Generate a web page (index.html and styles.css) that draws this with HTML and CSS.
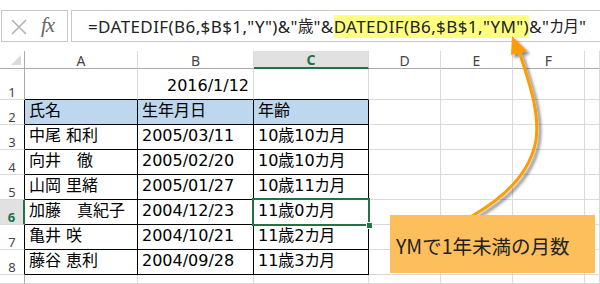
FILE: index.html
```html
<!DOCTYPE html>
<html lang="ja">
<head>
<meta charset="utf-8">
<link rel="stylesheet" href="styles.css">
</head>
<body>
<div class="fbar">
  <div class="fxbox">
    <svg class="xicon" width="18" height="18" viewBox="0 0 18 18"><path d="M2 2 L16 16 M16 2 L2 16" stroke="#b4b4b4" stroke-width="1.6" fill="none"/></svg>
    <span class="fx">fx</span>
  </div>
  <div class="formula">=DATEDIF(B6,$B$1,"Y")&amp;"<span class="jp">歳</span>"&amp;<span class="hl">DATEDIF(B6,$B$1,"YM")</span>&amp;"<span class="jp">カ月</span>"</div>
</div>
<div class="sheet">
  <div class="c h corner"><span class="tri"></span></div>
  <div class="c h">A</div>
  <div class="c h">B</div>
  <div class="c h selcol">C</div>
  <div class="c h">D</div>
  <div class="c h">E</div>
  <div class="c h">F</div>
  <div class="c h"></div>

  <div class="c rh">1</div>
  <div class="c top"></div>
  <div class="c top r">2016/1/12</div>
  <div class="c top"></div>
  <div class="c"></div><div class="c"></div><div class="c"></div><div class="c"></div>

  <div class="c rh tb">2</div>
  <div class="c t hd">氏名</div>
  <div class="c t hd">生年月日</div>
  <div class="c t hd">年齢</div>
  <div class="c"></div><div class="c"></div><div class="c"></div><div class="c"></div>

  <div class="c rh tb">3</div>
  <div class="c t">中尾 和利</div>
  <div class="c t">2005/03/11</div>
  <div class="c t age">10歳10カ月</div>
  <div class="c"></div><div class="c"></div><div class="c"></div><div class="c"></div>

  <div class="c rh tb">4</div>
  <div class="c t">向井　徹</div>
  <div class="c t">2005/02/20</div>
  <div class="c t age">10歳10カ月</div>
  <div class="c"></div><div class="c"></div><div class="c"></div><div class="c"></div>

  <div class="c rh tb">5</div>
  <div class="c t">山岡 里緒</div>
  <div class="c t">2005/01/27</div>
  <div class="c t age">10歳11カ月</div>
  <div class="c"></div><div class="c"></div><div class="c"></div><div class="c"></div>

  <div class="c rh tb selrow">6</div>
  <div class="c t">加藤　真紀子</div>
  <div class="c t">2004/12/23</div>
  <div class="c t age sel">11歳0カ月</div>
  <div class="c"></div><div class="c"></div><div class="c"></div><div class="c"></div>

  <div class="c rh tb">7</div>
  <div class="c t">亀井 咲</div>
  <div class="c t">2004/10/21</div>
  <div class="c t age">11歳2カ月</div>
  <div class="c"></div><div class="c"></div><div class="c"></div><div class="c"></div>

  <div class="c rh tb">8</div>
  <div class="c t">藤谷 恵利</div>
  <div class="c t">2004/09/28</div>
  <div class="c t age">11歳3カ月</div>
  <div class="c"></div><div class="c"></div><div class="c"></div><div class="c"></div>

  <div class="c rh"></div>
  <div class="c"></div><div class="c"></div><div class="c"></div>
  <div class="c"></div><div class="c"></div><div class="c"></div><div class="c"></div>
</div>

<svg class="arrow" width="600" height="284" viewBox="0 0 600 284">
  <defs>
    <filter id="sh" x="-20%" y="-20%" width="140%" height="140%">
      <feDropShadow dx="3" dy="3" stdDeviation="1.6" flood-color="#000" flood-opacity="0.45"/>
    </filter>
  </defs>
  <g filter="url(#sh)">
    <path d="M472 216 C500 200 530 175 536 140 C540 110 528 80 520 54" stroke="#ff9c00" stroke-width="3" fill="none" stroke-linecap="round"/>
    <path d="M512 36 L527 51 L511 55 Z" fill="#ff9c00"/>
  </g>
</svg>
<div class="callout">YMで1年未満の月数</div>
</body>
</html>
```

FILE: styles.css
```css
html, body {
  margin: 0;
  padding: 0;
  background: #fff;
}
body {
  width: 600px;
  height: 284px;
  overflow: hidden;
  position: relative;
  font-family: "DejaVu Sans", "Noto Sans CJK JP", sans-serif;
}
.fbar {
  display: flex;
  margin-top: 10px;
  height: 32px;
  margin-left: 1px;
}
.fxbox {
  width: 67px;
  box-sizing: border-box;
  border: 1px solid #c8c8c8;
  display: flex;
  align-items: center;
  padding-left: 8px;
  gap: 13px;
}
.xicon { display: block; margin-top: 1px; }
.fx {
  font-family: "Liberation Serif", serif;
  font-style: italic;
  font-size: 21px;
  color: #666;
  letter-spacing: -1px;
  line-height: 1;
  margin-top: -2px;
}
.formula {
  flex: 1;
  margin-left: 3px;
  box-sizing: border-box;
  border: 1px solid #c8c8c8;
  border-right: none;
  display: flex;
  align-items: center;
  padding-left: 16px;
  font-family: "Noto Sans", "Noto Sans CJK JP", sans-serif;
  font-size: 17px;
  letter-spacing: 0.4px;
  color: #222;
  white-space: nowrap;
  line-height: 23px;
}
.formula .jp {
  font-size: 15.5px;
  letter-spacing: 0;
  font-feature-settings: "palt";
}
.hl { background: #ffff80; }

.sheet {
  margin-top: 9px;
  display: grid;
  grid-template-columns: 25px 113px 116px 115px 72px 72px 72px 15px;
  grid-template-rows: 18px 31px repeat(7, 25px) 9px;
}
.c {
  box-sizing: border-box;
  border-right: 1px solid #d9d9d9;
  border-bottom: 1px solid #d9d9d9;
  display: flex;
  align-items: flex-end;
  padding: 0 4px 5px 4px;
  font-size: 16px;
  line-height: 16px;
  color: #000;
  white-space: nowrap;
  overflow: visible;
}
.h {
  justify-content: center;
  padding: 0;
  font-family: "Noto Sans", sans-serif;
  font-size: 14px;
  line-height: 14px;
  color: #444;
  border-bottom-color: #ababab;
  border-right-color: #dcdcdc;
}
.corner { position: relative; border-right-color: #ababab; }
.tri {
  position: absolute;
  right: 3px;
  bottom: 3px;
  width: 0;
  height: 0;
  border-left: 10px solid transparent;
  border-bottom: 10px solid #dadada;
}
.rh {
  justify-content: center;
  padding: 0;
  font-family: "Noto Sans", sans-serif;
  font-size: 13px;
  line-height: 13px;
  color: #444;
  border-right-color: #ababab;
}
.rh.tb { border-right-color: #000; }
.top { border-bottom-color: #000; }
.t { border-right-color: #000; border-bottom-color: #000; }
.hd { background: #bdd7ee; }
.r { justify-content: flex-end; }
.age { font-feature-settings: "palt"; }
.selcol {
  background: #e1e1e1;
  border-bottom: 2px solid #217346;
  color: #217346;
  font-weight: bold;
}
.selrow {
  background: #e1e1e1;
  border-right: 2px solid #217346;
  color: #217346;
  font-weight: bold;
}
.rh.tb.selrow { border-right-color: #217346; }
.sel { position: relative; }
.sel::after {
  content: "";
  position: absolute;
  left: -2px;
  top: -2px;
  right: -2px;
  bottom: -2px;
  border: 2px solid #217346;
}
.sel::before {
  content: "";
  position: absolute;
  right: -5px;
  bottom: -5px;
  width: 5px;
  height: 5px;
  background: #217346;
  border: 1px solid #fff;
  z-index: 2;
}
.arrow {
  position: absolute;
  left: 0;
  top: 0;
  pointer-events: none;
}
.callout {
  position: absolute;
  left: 390px;
  top: 215px;
  width: 205px;
  height: 58px;
  box-sizing: border-box;
  background: #fdbf5b;
  padding: 17px 0 0 6px;
  font-family: "Noto Sans CJK JP", sans-serif;
  font-size: 19.5px;
  line-height: 28px;
  color: #222;
}
```
